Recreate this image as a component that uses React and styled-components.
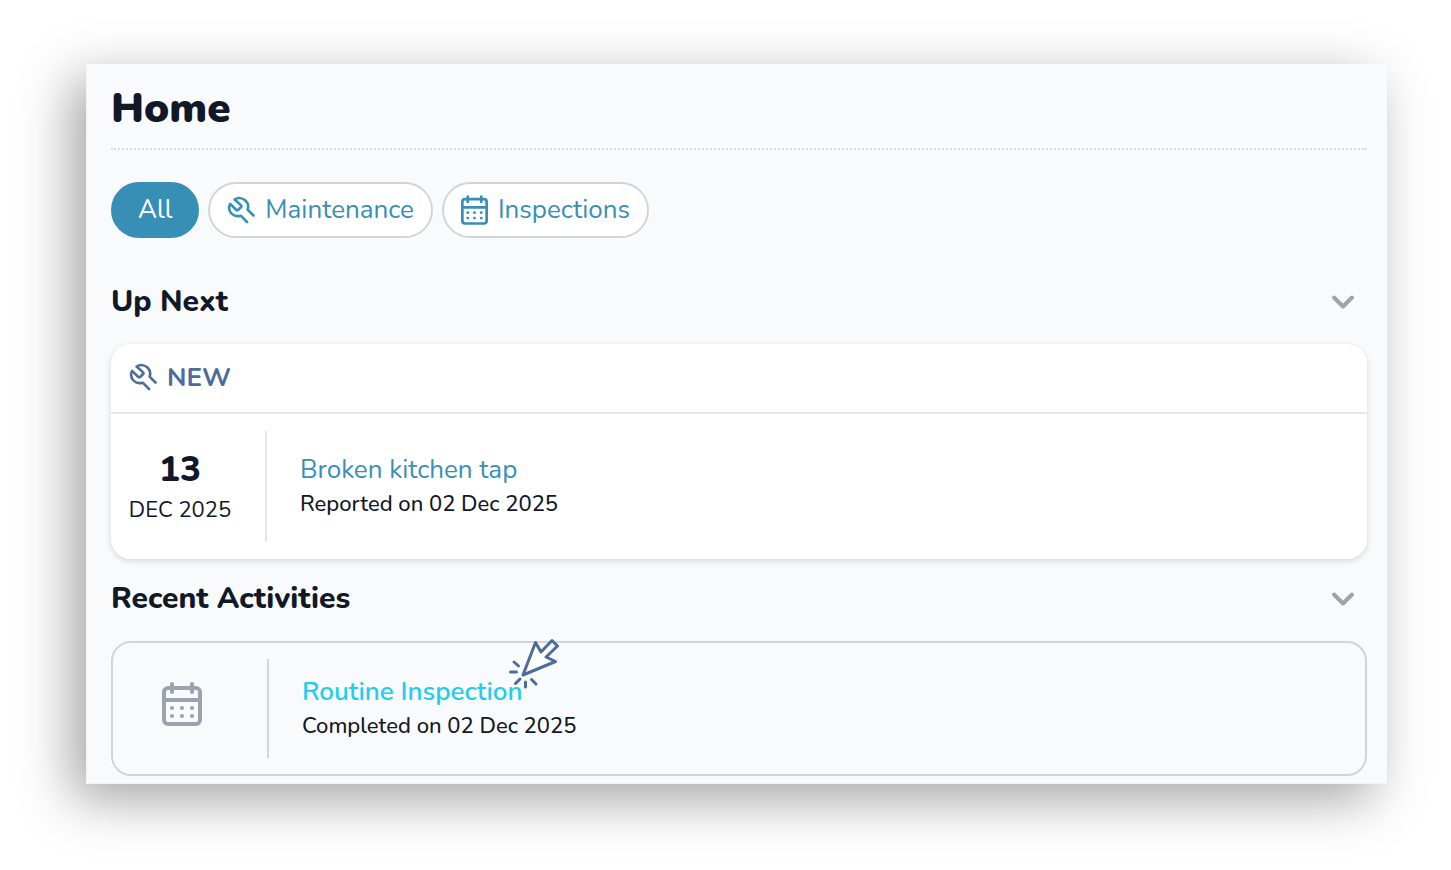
import { useState } from 'react';
import styled, { createGlobalStyle } from 'styled-components';

const GlobalStyle = createGlobalStyle`
  * {
    box-sizing: border-box;
  }
  body {
    margin: 0;
    background: #fff;
    color: #111827;
    font-family: Nunito, Lato, "Open Sans", sans-serif;
  }
  h1, h2, p {
    margin: 0;
  }
`;

const Page = styled.div`
  padding: 64px 64px 86px 86px;
`;

const Panel = styled.main`
  padding: 17px 20px 7px 24px;
  background: #f9fafc;
  border: 1px solid #f1f2f4;
  border-width: 0 0 1px 1px;
  box-shadow: -14px 15px 50px rgba(0, 0, 0, 0.36);
`;

const Title = styled.h1`
  padding-bottom: 11px;
  border-bottom: 2px dotted #d9d8ee;
  font-size: 42px;
  line-height: 56px;
  font-weight: 900;
`;

const Filters = styled.div`
  display: flex;
  gap: 9px;
  padding: 32px 0 36px;
`;

const FilterButton = styled.button`
  display: flex;
  align-items: center;
  gap: 10px;
  height: 56px;
  padding: ${({ $wide }) => ($wide ? '0 25px' : '0 17px')};
  border: 2px solid ${({ $active }) => ($active ? '#388fb6' : '#d1d5db')};
  border-radius: 28px;
  background: ${({ $active }) => ($active ? '#388fb6' : '#fff')};
  color: ${({ $active }) => ($active ? '#fff' : '#388fb6')};
  font-family: inherit;
  font-size: 26px;
  line-height: 36px;
  cursor: pointer;
`;

const SectionHeader = styled.div`
  display: flex;
  align-items: center;
  justify-content: space-between;
  height: 56px;
  padding-right: 12px;
`;

const SectionTitle = styled.h2`
  font-size: 30px;
  line-height: 40px;
  font-weight: 800;
`;

const ToggleButton = styled.button`
  display: flex;
  padding: 0;
  border: 0;
  background: none;
  color: #9ca3af;
  cursor: pointer;
`;

const Card = styled.article`
  margin: 14px 0 12px;
  border-radius: 20px;
  background: #fff;
  box-shadow: 0 2px 6px rgba(0, 0, 0, 0.14);
`;

const OutlineCard = styled.article`
  margin-top: 14px;
  border: 2px solid #d1d5db;
  border-radius: 20px;
`;

const CardStatus = styled.div`
  display: flex;
  align-items: center;
  gap: 10px;
  height: 70px;
  padding: 0 18px 2px;
  border-bottom: 2px solid #e5e7eb;
  color: #4d6c9a;
  font-size: 26px;
  font-weight: 700;
`;

const CardBody = styled.div`
  display: flex;
  padding: ${({ $compact }) => ($compact ? '16px 0' : '17px 0')};
`;

const Marker = styled.div`
  display: flex;
  flex-direction: column;
  align-items: center;
  justify-content: center;
  width: 156px;
  min-height: ${({ $compact }) => ($compact ? '99px' : '111px')};
  padding: ${({ $compact }) => ($compact ? '0 16px 10px 0' : '2px 16px 0 0')};
  border-right: 2px solid ${({ $compact }) => ($compact ? '#d1d5db' : '#e5e7eb')};
  color: ${({ $compact }) => ($compact ? '#9ca3af' : '#111827')};
`;

const Day = styled.span`
  font-size: 35px;
  line-height: 44px;
  font-weight: 800;
`;

const Month = styled.span`
  font-size: 22px;
  line-height: 36px;
`;

const Details = styled.div`
  display: flex;
  flex-direction: column;
  align-items: flex-start;
  justify-content: center;
  padding-left: 33px;
`;

const ActivityLink = styled.a`
  position: relative;
  color: ${({ $highlight }) => ($highlight ? '#22ccee' : '#388fb6')};
  font-size: 26px;
  line-height: 34px;
  font-weight: ${({ $highlight }) => ($highlight ? 600 : 400)};
  text-decoration: none;
`;

const Note = styled.p`
  font-size: 22px;
  line-height: 34px;
  font-weight: 500;
`;

const Pointer = styled.svg`
  position: absolute;
  right: -38px;
  bottom: 19px;
  width: 52px;
  height: 52px;
`;

function WrenchIcon() {
  return (
    <svg width="28" height="28" viewBox="-1 0 28 28" fill="none" stroke="currentColor" strokeWidth="2.6" strokeLinecap="round" strokeLinejoin="round" aria-hidden="true">
      <path d="M25.5 19.5 19.6 13.6C20.7 10.4 20.1 7 17.7 4.7C14.7 1.8 10.2 1.4 6.6 3.5L13.4 9.6V10.8L9.8 14.2H8.6L2.1 7.9C.4 11.4 1.1 15.2 3.9 17.9C6.2 20 9.5 20.6 12.8 19.7L19 26" />
    </svg>
  );
}

function CalendarIcon({ size }) {
  return (
    <svg width={size} height={Math.round(size * 1.1)} viewBox="0 0 40 44" fill="none" stroke="currentColor" strokeWidth="4" strokeLinecap="round" aria-hidden="true">
      <rect x="2" y="6" width="36" height="36" rx="4" />
      <path d="M2 18h36M10 2v8M30 2v8" />
      <g fill="currentColor" stroke="none">
        {[10, 20, 30].map((x) => (
          <g key={x}>
            <circle cx={x} cy="26" r="2.1" />
            <circle cx={x} cy="34" r="2.1" />
          </g>
        ))}
      </g>
    </svg>
  );
}

function ChevronIcon() {
  return (
    <svg width="24" height="16" viewBox="0 0 24 16" fill="none" stroke="currentColor" strokeWidth="4" strokeLinecap="round" strokeLinejoin="round" aria-hidden="true">
      <path d="M3 3.5l9 9 9-9" />
    </svg>
  );
}

function ClickPointer() {
  return (
    <Pointer viewBox="0 0 52 52" fill="none" stroke="#4d6c9a" strokeWidth="3" strokeLinecap="round" strokeLinejoin="round" aria-hidden="true">
      <path d="M15 37 27.5 4.5 33 14 44 2.5 49.5 8 38 19 47.5 23.5Z" fill="#fff" />
      <path d="M6 24l4.5 4M2.5 34h6M12 41l-4.5 4.5M17.5 44v5M23.5 41.5l4.5 4.5" />
    </Pointer>
  );
}

function Section({ title, children }) {
  const [open, setOpen] = useState(true);

  return (
    <section>
      <SectionHeader>
        <SectionTitle>{title}</SectionTitle>
        <ToggleButton type="button" aria-label={`Toggle ${title}`} aria-expanded={open} onClick={() => setOpen(!open)}>
          <ChevronIcon />
        </ToggleButton>
      </SectionHeader>
      {open && children}
    </section>
  );
}

export default function App() {
  const [filter, setFilter] = useState('all');

  return (
    <Page>
      <GlobalStyle />
      <Panel>
        <Title>Home</Title>
        <Filters>
          <FilterButton type="button" $wide $active={filter === 'all'} onClick={() => setFilter('all')}>
            All
          </FilterButton>
          <FilterButton type="button" $active={filter === 'maintenance'} onClick={() => setFilter('maintenance')}>
            <WrenchIcon />
            Maintenance
          </FilterButton>
          <FilterButton type="button" $active={filter === 'inspections'} onClick={() => setFilter('inspections')}>
            <CalendarIcon size={27} />
            Inspections
          </FilterButton>
        </Filters>
        <Section title="Up Next">
          <Card>
            <CardStatus>
              <WrenchIcon />
              NEW
            </CardStatus>
            <CardBody>
              <Marker>
                <Day>13</Day>
                <Month>DEC 2025</Month>
              </Marker>
              <Details>
                <ActivityLink href="#tap">Broken kitchen tap</ActivityLink>
                <Note>Reported on 02 Dec 2025</Note>
              </Details>
            </CardBody>
          </Card>
        </Section>
        <Section title="Recent Activities">
          <OutlineCard>
            <CardBody $compact>
              <Marker $compact>
                <CalendarIcon size={40} />
              </Marker>
              <Details>
                <ActivityLink href="#inspection" $highlight>
                  Routine Inspection
                  <ClickPointer />
                </ActivityLink>
                <Note>Completed on 02 Dec 2025</Note>
              </Details>
            </CardBody>
          </OutlineCard>
        </Section>
      </Panel>
    </Page>
  );
}
